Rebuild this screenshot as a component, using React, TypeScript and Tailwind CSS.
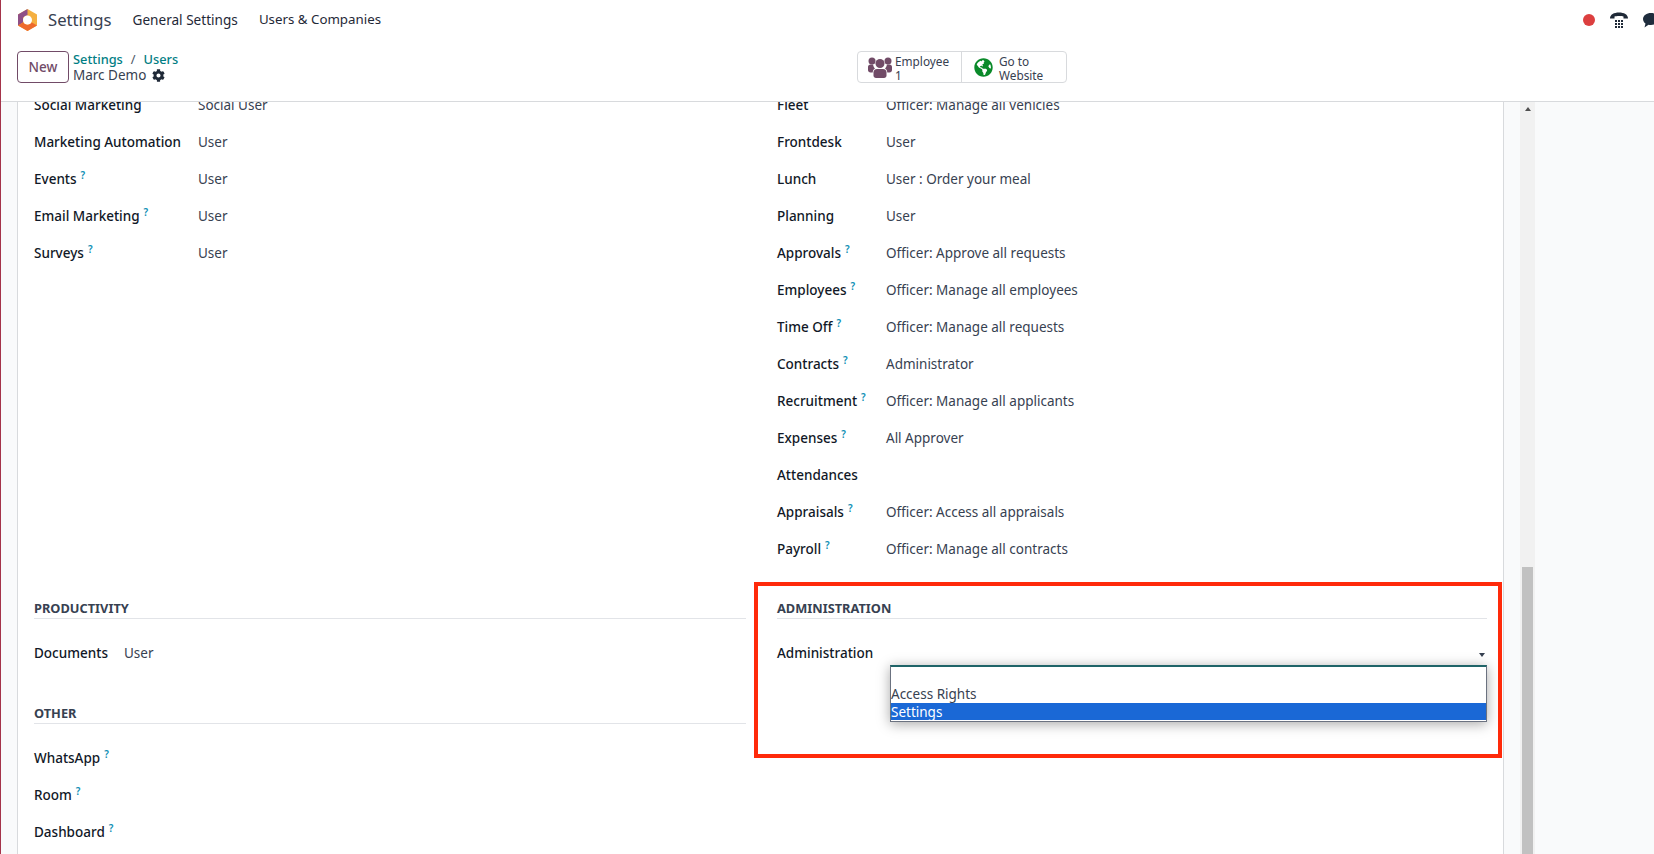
import { FaCog, FaGlobeAmericas } from "react-icons/fa";

const font = "font-['Noto_Sans',sans-serif]";

function Row({ label, help, value, valueClass }: { label: string; help?: boolean; value?: string; valueClass: string }) {
    return (
        <div className="flex h-[37px] items-center pt-[2px] text-[13.5px] leading-[21px]">
            <div className={`${valueClass} mb-px shrink-0 font-medium text-[#111827]`}>
                {label}
                {help && <sup className="ml-1 text-[10px] font-semibold text-[#0f8fb5]">?</sup>}
            </div>
            {value && <div className="text-[#374151]">{value}</div>}
        </div>
    );
}

function Heading({ children }: { children: string }) {
    return (
        <div className="flex h-[22px] items-end border-b border-[#e2e4e8] pb-[3px] text-[12.8px] font-bold uppercase leading-none text-[#374151]">
            {children}
        </div>
    );
}

const leftRows = [
    { label: "Social Marketing", value: "Social User" },
    { label: "Marketing Automation", value: "User" },
    { label: "Events", help: true, value: "User" },
    { label: "Email Marketing", help: true, value: "User" },
    { label: "Surveys", help: true, value: "User" },
];

const rightRows = [
    { label: "Fleet", value: "Officer: Manage all vehicles" },
    { label: "Frontdesk", value: "User" },
    { label: "Lunch", value: "User : Order your meal" },
    { label: "Planning", value: "User" },
    { label: "Approvals", help: true, value: "Officer: Approve all requests" },
    { label: "Employees", help: true, value: "Officer: Manage all employees" },
    { label: "Time Off", help: true, value: "Officer: Manage all requests" },
    { label: "Contracts", help: true, value: "Administrator" },
    { label: "Recruitment", help: true, value: "Officer: Manage all applicants" },
    { label: "Expenses", help: true, value: "All Approver" },
    { label: "Attendances" },
    { label: "Appraisals", help: true, value: "Officer: Access all appraisals" },
    { label: "Payroll", help: true, value: "Officer: Manage all contracts" },
];

export default function App() {
    return (
        <div className={`${font} flex h-screen flex-col overflow-hidden border-l border-[#a5344a] bg-white`}>
            {/* top nav */}
            <div className="flex h-12 shrink-0 items-center overflow-hidden whitespace-nowrap pb-2 pl-4">
                <svg width="21" height="22" viewBox="0 0 21 22" className="shrink-0">
                    <path d="M10.5 0 20 5.5v11L10.5 22 1 16.5v-11z" fill="#f5b041" />
                    <path d="M10.5 0 1 5.5v11l5-3v-5l4.5-2.500z" fill="#8f4f86" />
                    <path d="M1 16.5 10.5 22l9.5-5.500-5-3-4.500 2.500L6 13.500z" fill="#ee6a2c" />
                    <circle cx="10.500" cy="11" r="4.500" fill="#fff" />
                </svg>
                <span className="ml-[10px] shrink-0 text-[16.7px] text-[#374151]">Settings</span>
                <span className="ml-[21px] shrink-0 text-[13.6px] text-[#1f2937]">General Settings</span>
                <span className="ml-[21px] shrink-0 text-[13.3px] text-[#1f2937]">Users &amp; Companies</span>
                <div className="ml-[1202px] flex shrink-0 items-center">
                    <div className="h-3 w-3 rounded-full bg-[#dc3f3f]" />
                    <svg width="18" height="16" viewBox="0 0 18 16" className="ml-[15px]" fill="#1f2937">
                        <path d="M0 6.500C0 2.500 4 .5 9 .5s9 2 9 6h-4.500V4.500C11.500 3.700 6.500 3.700 4.500 4.500v2z" />
                        <path d="M5 8h2v2H5zM8 8h2v2H8zM11 8h2v2h-2zM5 11h2v2H5zM8 11h2v2H8zM11 11h2v2h-2zM5 14h2v2H5zM8 14h2v2H8zM11 14h2v2h-2z" />
                    </svg>
                    <svg width="18" height="15" viewBox="0 0 18 15" className="ml-[15px] shrink-0" fill="#1f2d3d">
                        <path d="M8 0c4.400 0 8 2.600 8 6s-3.600 6-8 6c-.9 0-1.700-.1-2.500-.3L1.500 14.500l1-3.900C1 9.400 0 7.800 0 6c0-3.400 3.600-6 8-6z" />
                    </svg>
                </div>
            </div>

            {/* control panel */}
            <div className="relative flex h-[54px] shrink-0 items-start border-b border-[#d8dadd] pl-4 pt-[3px]">
                <button className="h-8 w-[52px] rounded border border-[#714b67] text-[13.5px] font-medium text-[#714b67]">New</button>
                <div className="ml-[4px] flex flex-col text-[13.5px] leading-[16px]">
                    <div className="flex items-center text-[12.8px] font-medium text-[#017e84]">
                        <span>Settings</span>
                        <span className="mx-2 font-normal text-[#4b5563]">/</span>
                        <span>Users</span>
                    </div>
                    <div className="flex items-center text-[#374151]">
                        Marc Demo
                        <FaCog className="ml-[6px] text-[13px] text-[#1f2937]" />
                    </div>
                </div>
                <div className="absolute left-[856px] top-[3px] flex h-8 w-[210px] rounded border border-[#d8dadd] pt-px text-[11.8px] leading-[14px] text-[#374151]">
                    <div className="-mt-px flex w-[104px] items-center border-r border-[#d8dadd] pl-[10px]">
                        <svg width="24" height="21" viewBox="0 0 24 21" fill="#714b67" className="shrink-0">
                            <circle cx="4" cy="4" r="3.500" />
                            <circle cx="20" cy="4" r="3.500" />
                            <circle cx="12" cy="6.500" r="4.500" />
                            <path d="M0 10c0-1.500 1-2.500 2.500-2.500h2.500c.5 2 1 3 2 4-1.500.8-2.200 2-2.300 4H2.500C1 15.500 0 14.500 0 13zM24 10c0-1.500-1-2.500-2.500-2.500H19c-.5 2-1 3-2 4 1.500.8 2.200 2 2.300 4h2.200c1.500 0 2.500-1 2.500-2.500z" />
                            <path d="M9 12h6c2.200 0 3.500 1.500 3.500 3.500v3c0 1.500-1 2.500-2.500 2.500H8c-1.500 0-2.500-1-2.500-2.500v-3C5.500 13.500 6.800 12 9 12z" />
                        </svg>
                        <div className="ml-[3px] mt-px">
                            <div>Employee</div>
                            <div>1</div>
                        </div>
                    </div>
                    <div className="-mt-px flex flex-1 items-center pl-[12px]">
                        <FaGlobeAmericas className="text-[19px] text-[#0a8a2a]" />
                        <div className="ml-[6px] mt-px">
                            <div>Go to</div>
                            <div>Website</div>
                        </div>
                    </div>
                </div>
            </div>

            {/* form body */}
            <div className="flex min-h-0 flex-1 overflow-hidden bg-[#f9fafb]">
                <div className="w-4 shrink-0" />
                <div className="w-[1487px] shrink-0 border-x border-[#d8dadd] bg-white">
                    <div className="-mt-4 grid grid-cols-[712px_710px] gap-x-[31px] pl-4">
                        <div>
                            {leftRows.map((r) => (
                                <Row key={r.label} {...r} valueClass="w-[164px]" />
                            ))}
                        </div>
                        <div>
                            {rightRows.map((r) => (
                                <Row key={r.label} {...r} valueClass="w-[109px]" />
                            ))}
                        </div>
                        <div className="mt-[30px]">
                            <Heading>Productivity</Heading>
                            <div className="mt-[15px]">
                                <Row label="Documents" value="User" valueClass="w-[90px]" />
                            </div>
                            <div className="mt-[31px]">
                                <Heading>Other</Heading>
                            </div>
                            <div className="mt-[15px]">
                                <Row label="WhatsApp" help valueClass="w-[164px]" />
                                <Row label="Room" help valueClass="w-[164px]" />
                                <Row label="Dashboard" help valueClass="w-[164px]" />
                            </div>
                        </div>
                        <div className="relative mt-[30px]">
                            <Heading>Administration</Heading>
                            <div className="relative mt-[15px] flex h-[37px] items-center pt-[2px] text-[13.5px] font-medium text-[#111827]">
                                Administration
                                <span className="absolute right-[2px] top-[19px] h-0 w-0 border-x-[3.500px] border-t-[4px] border-x-transparent border-t-[#374151]" />
                            </div>
                            {/* open select list + annotation box */}
                            <div className="absolute left-[113px] right-0 top-[68px] h-[57px] border border-t-2 border-[#6b7280] border-t-[#1f6468] bg-white pb-px pt-[18px] text-[13.5px] leading-[19px] text-[#374151] shadow-[0_2px_12px_rgba(0,0,0,0.35)]">
                                <div className="h-[18px]">Access Rights</div>
                                <div className="h-[17px] bg-[#1a68d6] text-white">Settings</div>
                            </div>
                            <div className="pointer-events-none absolute -left-[23px] -right-[15px] -top-[15px] h-[176px] border-4 border-[#ff2a0a]" />
                        </div>
                    </div>
                </div>
                <div className="w-4 shrink-0" />
                <div className="flex w-[15px] shrink-0 flex-col bg-[#f1f1f1]">
                    <div className="flex h-[13px] items-center justify-center">
                        <span className="h-0 w-0 border-x-[3.500px] border-b-[4px] border-x-transparent border-b-[#505050]" />
                    </div>
                    <div className="h-[452px] shrink-0" />
                    <div className="mx-[2px] flex-1 bg-[#c1c1c1]" />
                </div>
            </div>
        </div>
    );
}
